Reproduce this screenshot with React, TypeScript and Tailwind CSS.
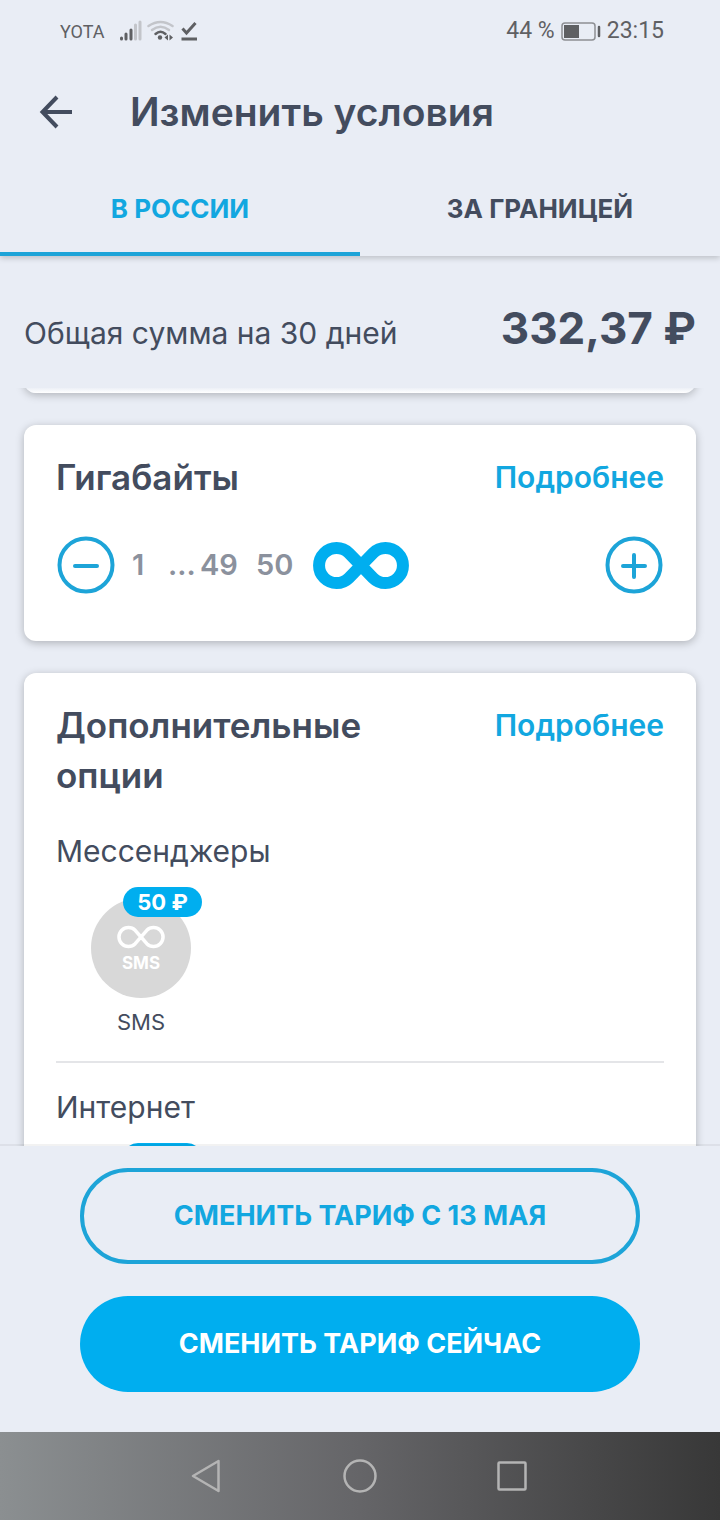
import { useState } from 'react';
import type { ReactNode } from 'react';

type OptionItem = {
  name?: string;
  label?: string;
  price?: string;
};

type OptionGroup = {
  title: string;
  items: OptionItem[];
};

const optionGroups: OptionGroup[] = [
  {
    title: 'Мессенджеры',
    items: [{ name: 'SMS', label: 'SMS', price: '50 ₽' }],
  },
  {
    title: 'Интернет',
    items: [{}],
  },
];

function StatusBar() {
  return (
    <div className="flex h-16 items-center justify-between pr-14 pb-px pl-15 font-[Roboto,sans-serif] text-[#5f6063]">
      <div className="flex items-center">
        <span className="text-lg">YOTA</span>
        <svg className="ml-3.5 h-6 w-20" viewBox="0 0 80 24" fill="none">
          <g strokeWidth="3" strokeLinecap="round">
            <path d="M2.500 19v-1M7 19v-5M12 19v-9" stroke="#5f6063" />
            <path d="M16.500 19v-14M21 19V2" stroke="#c3c5ca" />
          </g>
          <g strokeWidth="2.500" strokeLinecap="round">
            <path d="M29.500 6Q41.500 -2 53.500 6" stroke="#c3c5ca" />
            <path d="M33 10Q41.500 3.500 50 10" stroke="#c3c5ca" />
            <path d="M36.500 14Q41.500 9.500 46.500 14" stroke="#5f6063" />
          </g>
          <circle cx="41" cy="17.500" r="2.200" fill="#5f6063" />
          <path d="M49 14.500v6l-3.500-3zM50.500 14.500v6l3.500-3z" fill="#5f6063" />
          <path d="M63.500 8.500l4 4.500 9-10M62.500 19h15.500" stroke="#5f6063" strokeWidth="3" />
        </svg>
      </div>
      <div className="flex items-center text-[23px]">
        <span>44 %</span>
        <svg className="mx-1.5 h-5 w-10" viewBox="0 0 40 20" fill="none">
          <rect x="1" y="1" width="33" height="17" rx="3" stroke="#8d8f93" strokeWidth="1.500" />
          <rect x="3" y="3" width="15" height="13" fill="#5f6063" />
          <path d="M38 5v9" stroke="#5f6063" strokeWidth="2.500" strokeLinecap="round" />
        </svg>
        <span>23:15</span>
      </div>
    </div>
  );
}

function Card({ children }: { children: ReactNode }) {
  return (
    <section className="rounded-xl bg-white px-8 pt-[27px] pb-8 shadow-[0_2px_8px_rgba(0,0,0,0.25)]">
      {children}
    </section>
  );
}

function CardHeader({ title }: { title: string }) {
  return (
    <div className="flex items-start justify-between">
      <h2 className="max-w-3/5 text-[35px] leading-[50px] font-semibold">{title}</h2>
      <a href="#details" className="text-[30px] leading-[50px] font-semibold text-[#12a7e0]">
        Подробнее
      </a>
    </div>
  );
}

function RoundButton({ label, plus, onClick }: { label: string; plus?: boolean; onClick: () => void }) {
  return (
    <button type="button" aria-label={label} onClick={onClick} className="size-15 shrink-0 text-[#1da4d8]">
      <svg viewBox="0 0 60 60" fill="none" stroke="currentColor" strokeWidth="4">
        <circle cx="30" cy="30" r="26.500" />
        <path d={plus ? 'M19 31h22M30 20v22' : 'M19 31h22'} strokeLinecap="round" />
      </svg>
    </button>
  );
}

function Gigabytes() {
  const [value, setValue] = useState(51);

  return (
    <Card>
      <CardHeader title="Гигабайты" />
      <div className="mt-[33px] mb-3.5 flex h-15 items-center">
        <RoundButton label="Меньше" onClick={() => setValue(Math.max(1, value - 1))} />
        <div className="ml-4 flex flex-1 items-center text-[29px] font-semibold text-[#8b919d]">
          <span className="w-9">1</span>
          <span className="w-8">...</span>
          <span className="w-14">49</span>
          <span className="w-14">50</span>
          <svg className="ml-px h-12 w-24" viewBox="0 0 96 48" fill="none" role="img" aria-label="Безлимит">
            <path
              d="M48 24.500L35.900 12.100A17.500 17.500 0 1 0 35.900 36.900L60.100 12.100A17.500 17.500 0 1 1 60.100 36.900z"
              stroke="#00aeef"
              strokeWidth="12"
            />
          </svg>
        </div>
        <RoundButton label="Больше" plus onClick={() => setValue(Math.min(51, value + 1))} />
      </div>
    </Card>
  );
}

function Option({ name, label, price }: OptionItem) {
  return (
    <button type="button" className="flex w-[170px] flex-col items-center">
      <span className="relative flex size-[100px] flex-col items-center rounded-full bg-[#d8d8d8] pt-[27px] text-white">
        <svg className="h-6 w-12" viewBox="0 0 48 24" fill="none">
          <path
            d="M24 12L18.200 5.300A9.500 9.500 0 1 0 18.200 18.700L29.800 5.300A9.500 9.500 0 1 1 29.800 18.700z"
            stroke="currentColor"
            strokeWidth="3.500"
            strokeLinejoin="round"
          />
        </svg>
        <span className="text-[17px] leading-7 font-bold">{label}</span>
        <span className="absolute -top-[11px] left-8 flex h-[30px] w-[79px] items-center justify-center rounded-full bg-[#00aeef] text-[22px] font-bold">
          {price}
        </span>
      </span>
      <span className="mt-2 text-[22px] leading-8">{name}</span>
    </button>
  );
}

function ExtraOptions() {
  return (
    <Card>
      <CardHeader title="Дополнительные опции" />
      <div className="mt-[7px]">
        {optionGroups.map((group) => (
          <div key={group.title} className="border-b-2 border-[#e4e5e8] pt-6 pb-[23px] last:border-b-0">
            <h3 className="text-[30px] leading-10">{group.title}</h3>
            <div className="mt-[27px] flex">
              {group.items.map((item, index) => (
                <Option key={index} {...item} />
              ))}
            </div>
          </div>
        ))}
      </div>
    </Card>
  );
}

function NavBar() {
  return (
    <nav className="flex h-22 shrink-0 items-center justify-center gap-[116px] bg-linear-to-r from-[#8b8f91] via-[#656568] to-[#383838] text-[#b4b4b4]">
      <button type="button" aria-label="Назад">
        <svg className="size-9" viewBox="0 0 36 36" fill="none" stroke="currentColor" strokeWidth="2.500">
          <path d="M28.500 3v30L3 18z" strokeLinejoin="round" />
        </svg>
      </button>
      <button type="button" aria-label="Домой">
        <svg className="size-9" viewBox="0 0 36 36" fill="none" stroke="currentColor" strokeWidth="2.500">
          <circle cx="18" cy="18" r="15.500" />
        </svg>
      </button>
      <button type="button" aria-label="Недавние">
        <svg className="size-9" viewBox="0 0 36 36" fill="none" stroke="currentColor" strokeWidth="2.500">
          <rect x="4.500" y="4.500" width="27" height="27" rx="1" />
        </svg>
      </button>
    </nav>
  );
}

export default function App() {
  const [tab, setTab] = useState('russia');

  const tabClass = (active: boolean) =>
    `flex-1 border-b-4 pt-1 text-[26px] font-bold ${active ? 'border-[#1da4d8] text-[#12a7e0]' : 'border-transparent'}`;

  return (
    <div className="flex h-screen flex-col bg-[#e9edf5] font-[Inter,sans-serif] text-[#434c5e]">
      <header className="shrink-0 shadow-[0_2px_6px_rgba(0,0,0,0.2)]">
        <StatusBar />
        <div className="flex h-24 items-center gap-[54px] px-9">
          <button type="button" aria-label="Назад">
            <svg className="size-10" viewBox="0 0 40 40" fill="none" stroke="currentColor" strokeWidth="4">
              <path d="M36 20H7M21 5L6.500 20l14.500 15" />
            </svg>
          </button>
          <h1 className="text-[39px] font-semibold">Изменить условия</h1>
        </div>
        <div role="tablist" className="flex h-24">
          <button
            type="button"
            role="tab"
            aria-selected={tab === 'russia'}
            className={tabClass(tab === 'russia')}
            onClick={() => setTab('russia')}
          >
            В РОССИИ
          </button>
          <button
            type="button"
            role="tab"
            aria-selected={tab === 'abroad'}
            className={tabClass(tab === 'abroad')}
            onClick={() => setTab('abroad')}
          >
            ЗА ГРАНИЦЕЙ
          </button>
        </div>
      </header>
      <div className="flex h-33 shrink-0 items-baseline justify-between px-6 pt-[39px]">
        <span className="text-[30px]">Общая сумма на 30 дней</span>
        <span className="text-[44px] font-bold">332,37 ₽</span>
      </div>
      <main className="flex min-h-0 flex-1 flex-col gap-8 overflow-y-auto px-6 [scrollbar-width:none]">
        <div className="-mt-[35px] h-10 shrink-0 rounded-b-xl bg-linear-to-b from-[#e9edf5] from-85% to-white shadow-[0_2px_8px_rgba(0,0,0,0.25)]" />
        <Gigabytes />
        <ExtraOptions />
      </main>
      <footer className="relative -mt-0.5 flex shrink-0 flex-col gap-8 border-t-2 border-black/5 bg-[#e9edf5] bg-clip-padding px-20 pt-[22px] pb-10 text-[27px] font-bold">
        <button type="button" className="h-24 rounded-full border-4 border-[#1da4d8] text-[#12a7e0]">
          СМЕНИТЬ ТАРИФ С 13 МАЯ
        </button>
        <button type="button" className="h-24 rounded-full bg-[#00aeef] text-white">
          СМЕНИТЬ ТАРИФ СЕЙЧАС
        </button>
      </footer>
      <NavBar />
    </div>
  );
}
